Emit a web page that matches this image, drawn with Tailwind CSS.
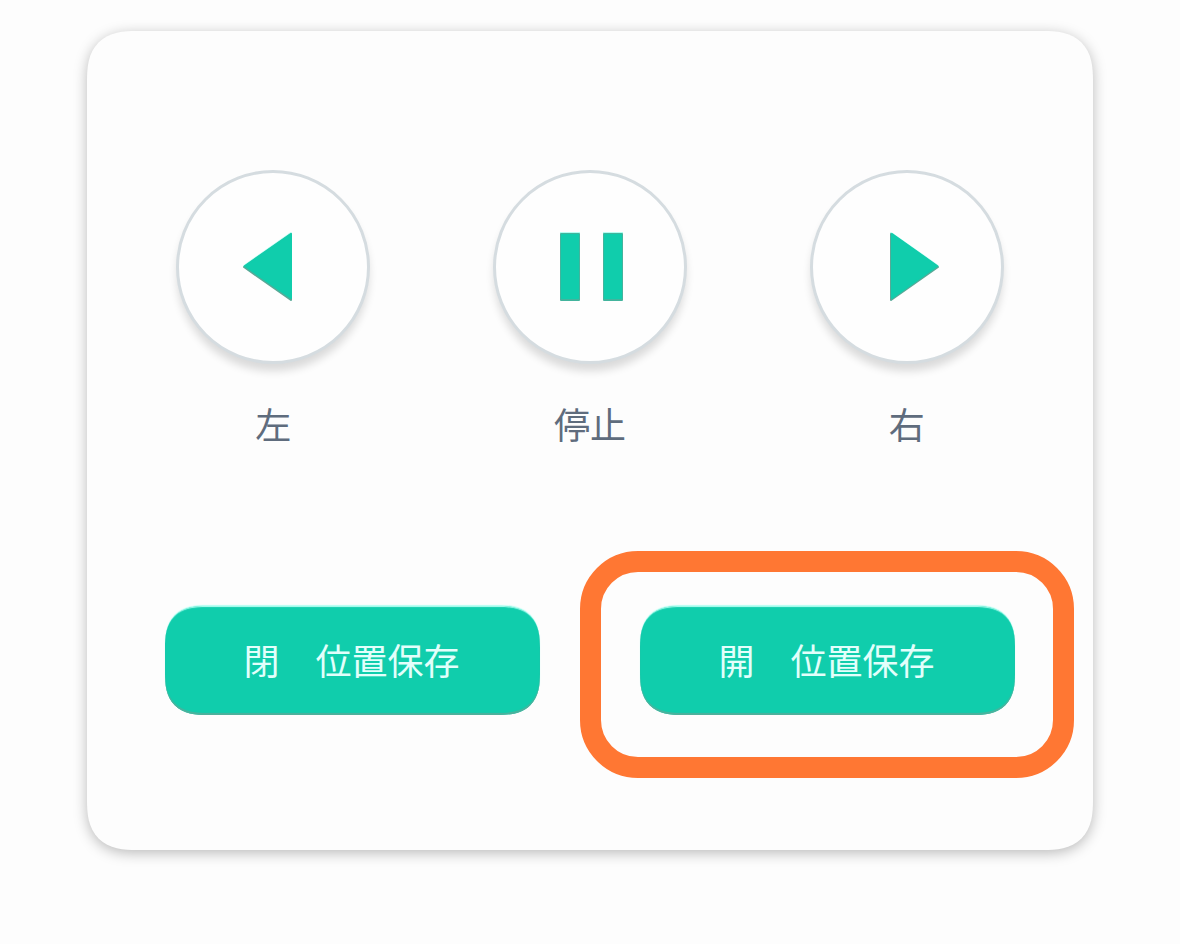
<!DOCTYPE html>
<html lang="ja">
<head>
<meta charset="utf-8">
<meta name="viewport" content="width=device-width, initial-scale=1">
<title>位置保存</title>
<script src="https://cdn.jsdelivr.net/npm/@tailwindcss/browser@4"></script>
</head>
<body class="min-h-screen bg-[#fdfdfd] px-[87px] py-[31px] font-['Noto_Sans_CJK_JP','Noto_Sans',sans-serif] text-4xl text-[#5f6c7d]">
<main class="rounded-[50px] bg-[#fdfdfd] pt-[139px] pb-[135px] shadow-[0_3px_14px_0_rgba(0,0,0,0.27)] [corner-shape:superellipse(1.4)]">
  <div class="mx-7 grid grid-cols-3">
    <div class="flex flex-col items-center gap-9">
      <button type="button" aria-labelledby="label-left" class="flex size-[194px] items-center justify-center rounded-full border-3 border-[#d5dce0] bg-[#fefefe] shadow-[0_8px_8px_-1px_rgba(0,0,0,0.14)]">
        <svg class="size-20" viewBox="-40 -40 80 80" aria-hidden="true">
          <path d="M-29 0 18 -33V33Z" fill="#b4fff2" stroke="#b4fff2" stroke-width="2" stroke-linejoin="round" transform="translate(0 -1)"/>
          <path d="M-29 0 18 -33V33Z" fill="#58a997" stroke="#58a997" stroke-width="2" stroke-linejoin="round"/>
          <path d="M-28 -1 18 -33V31Z" fill="#10cdac" stroke="#10cdac" stroke-width="2" stroke-linejoin="round"/>
        </svg>
      </button>
      <span id="label-left" class="leading-[46px]">左</span>
    </div>
    <div class="flex flex-col items-center gap-9">
      <button type="button" aria-labelledby="label-stop" class="flex size-[194px] items-center justify-center rounded-full border-3 border-[#d5dce0] bg-[#fefefe] shadow-[0_8px_8px_-1px_rgba(0,0,0,0.14)]">
        <svg class="size-20" viewBox="-40 -40 80 80" aria-hidden="true">
          <path d="M-30 -35h20v10h-20zM13 -35h20v10h-20z" fill="#b4fff2"/>
          <rect x="-30" y="-34" width="20" height="68" rx="1" fill="#43b49d"/>
          <rect x="13" y="-34" width="20" height="68" rx="1" fill="#43b49d"/>
          <rect x="-29" y="-33" width="18" height="65" rx="1" fill="#10cdac"/>
          <rect x="14" y="-33" width="18" height="65" rx="1" fill="#10cdac"/>
        </svg>
      </button>
      <span id="label-stop" class="leading-[46px]">停止</span>
    </div>
    <div class="flex flex-col items-center gap-9">
      <button type="button" aria-labelledby="label-right" class="flex size-[194px] items-center justify-center rounded-full border-3 border-[#d5dce0] bg-[#fefefe] shadow-[0_8px_8px_-1px_rgba(0,0,0,0.14)]">
        <svg class="size-20" viewBox="-40 -40 80 80" aria-hidden="true">
          <path d="M31 0 -16 -33V33Z" fill="#b4fff2" stroke="#b4fff2" stroke-width="2" stroke-linejoin="round" transform="translate(0 -1)"/>
          <path d="M31 0 -16 -33V33Z" fill="#58a997" stroke="#58a997" stroke-width="2" stroke-linejoin="round"/>
          <path d="M30 -1 -15 -33V31Z" fill="#10cdac" stroke="#10cdac" stroke-width="2" stroke-linejoin="round"/>
        </svg>
      </button>
      <span id="label-right" class="leading-[46px]">右</span>
    </div>
  </div>
  <div class="mx-[78px] mt-40 grid grid-cols-2 gap-[100px]">
    <button type="button" class="h-[109px] whitespace-nowrap rounded-[42px] bg-[#10cdac] pr-0.5 pb-1 text-[#e2fffb] shadow-[0_-1px_1px_#b4fff2,inset_0_2px_1px_-1px_#b4fff2,inset_0_-2px_1px_#4fb09c] [corner-shape:superellipse(1.4)]">閉　位置保存</button>
    <div class="relative grid">
      <button type="button" class="h-[109px] whitespace-nowrap rounded-[42px] bg-[#10cdac] pr-0.5 pb-1 text-[#e2fffb] shadow-[0_-1px_1px_#b4fff2,inset_0_2px_1px_-1px_#b4fff2,inset_0_-2px_1px_#4fb09c] [corner-shape:superellipse(1.4)]">開　位置保存</button>
      <div class="pointer-events-none absolute -top-[55px] -right-[59px] -bottom-[63px] -left-[60px] rounded-[58px] border-[21px] border-[#ff7733]"></div>
    </div>
  </div>
</main>
</body>
</html>
